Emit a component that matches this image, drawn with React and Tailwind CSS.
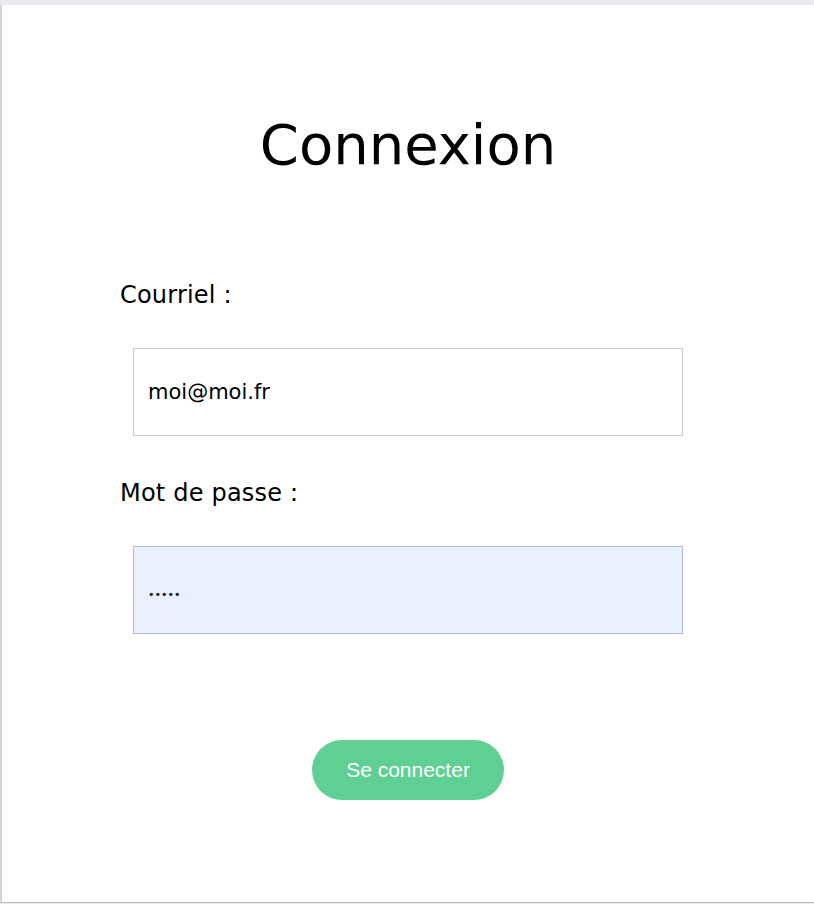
import React, { useState } from "react";

function App() {
  const [email, setEmail] = useState("moi@moi.fr");
  const [password, setPassword] = useState("12345");

  const login = (e) => {
    e.preventDefault();
  };

  return (
    <div className="w-[814px] h-[904px] bg-[#e9e9ee] pt-[5px] overflow-hidden">
      <div className="h-[898px] bg-white border-l-2 border-l-[#d2d2d8] border-b border-b-[#bdbdbd] font-['DejaVu_Sans',sans-serif] text-black">
        <h1 className="pt-[108px] text-center text-[56px] leading-[64px] font-normal">Connexion</h1>

        <form onSubmit={login} className="mt-[104px]">
          {/* Courriel */}
          <label className="block pl-[118px] text-[24px] leading-[28px] tracking-[0.2px]">Courriel :</label>
          <input
            type="email"
            value={email}
            onChange={(e) => setEmail(e.target.value)}
            className="block ml-[131px] mt-[39px] w-[550px] h-[88px] px-[14px] border border-[#cbcbcb] bg-white text-[21px] outline-none"
          />

          {/* Mot de passe */}
          <label className="block mt-[43px] pl-[118px] text-[24px] leading-[28px] tracking-[0.2px]">Mot de passe :</label>
          <input
            type="password"
            value={password}
            onChange={(e) => setPassword(e.target.value)}
            className="block ml-[131px] mt-[39px] w-[550px] h-[88px] px-[14px] pt-[8px] border border-[#b7bccb] bg-[#e8f0fe] text-[11px] outline-none"
          />

          {/* Bouton */}
          <div className="flex justify-center mt-[106px]">
            <button
              type="submit"
              className="w-[192px] h-[60px] rounded-[30px] bg-[#5fcf93] text-white text-[21px] font-['Liberation_Sans',sans-serif]"
            >
              Se connecter
            </button>
          </div>
        </form>
      </div>
    </div>
  );
}

export default App;
